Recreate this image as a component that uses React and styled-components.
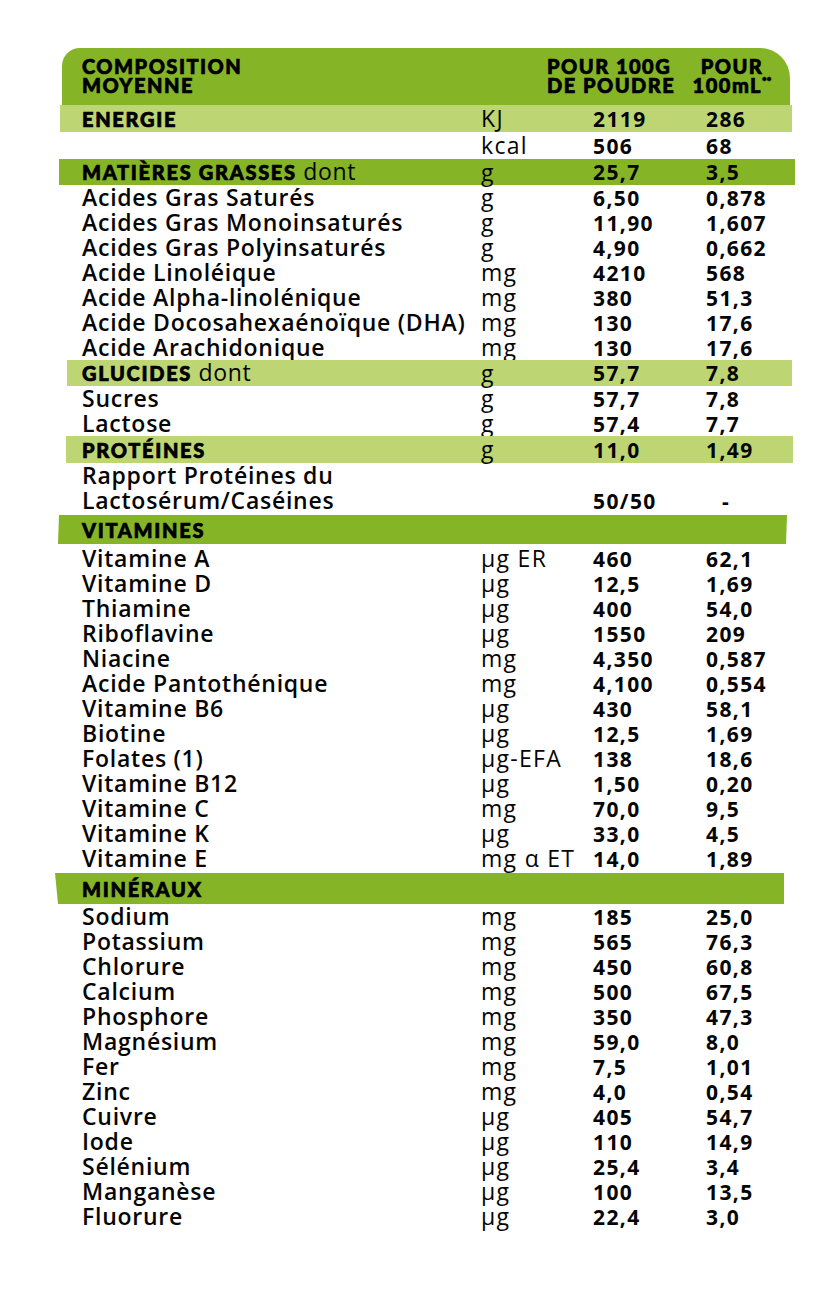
import React from 'react';
import styled, { createGlobalStyle } from 'styled-components';

const GlobalStyle = createGlobalStyle`
  html, body {
    margin: 0;
    padding: 0;
    background: #ffffff;
  }
  body {
    font-family: "Open Sans", "Liberation Sans", sans-serif;
    color: #050505;
  }
`;

const DARK = '#85b527';
const LIGHT = '#bdd572';

const Page = styled.div`
  width: 840px;
  height: 1291px;
  padding-top: 48px;
  box-sizing: border-box;
  display: flex;
  flex-direction: column;
`;

const Header = styled.div`
  margin-left: 62px;
  width: 728px;
  height: 57px;
  box-sizing: border-box;
  background: ${DARK};
  border-radius: 18px 30px 0 0;
  display: grid;
  grid-template-columns: 465px 141px 88px;
  padding: 9px 0 0 20px;
`;

const HeadText = styled.div`
  font-family: "Lato", "Roboto", sans-serif;
  font-weight: 900;
  font-size: 20px;
  line-height: 19px;
  letter-spacing: 1.5px;
  -webkit-text-stroke: 0.7px #000;
  color: #000;
  text-transform: uppercase;
  text-align: ${(p) => p.$align || 'left'};
  white-space: nowrap;

  sup {
    font-size: 11px;
    vertical-align: 7px;
    line-height: 0;
    letter-spacing: 0;
  }
`;

const Row = styled.div`
  margin-left: ${(p) => p.$l}px;
  width: ${(p) => p.$r - p.$l}px;
  height: ${(p) => p.$h}px;
  margin-top: ${(p) => p.$mt || 0}px;
  padding-left: ${(p) => 82 - p.$l}px;
  box-sizing: border-box;
  background: ${(p) => (p.$bg === 'dark' ? DARK : p.$bg === 'light' ? LIGHT : 'transparent')};
  clip-path: ${(p) => p.$clip || 'none'};
  display: grid;
  grid-template-columns: 399px 112px 113px 1fr;
  align-items: center;
`;

const Label = styled.div`
  font-size: 23px;
  font-weight: 600;
  line-height: 23px;
  white-space: nowrap;
  letter-spacing: 0.75px;
`;

const Title = styled.span`
  font-family: "Lato", "Roboto", sans-serif;
  font-weight: 900;
  font-size: 20px;
  letter-spacing: 1.7px;
  -webkit-text-stroke: 0.7px #000;
  color: #000;
  text-transform: uppercase;
`;

const Suffix = styled.span`
  font-weight: 500;
  letter-spacing: 0.6px;
`;

const Unit = styled.div`
  font-size: 23px;
  font-weight: 500;
  line-height: 23px;
  white-space: nowrap;
  letter-spacing: 1.3px;
`;

const Value = styled.div`
  font-size: 21px;
  font-weight: 700;
  line-height: 22px;
  white-space: nowrap;
  letter-spacing: 1.4px;
  padding-left: ${(p) => (p.$dash ? '16px' : '0')};
`;

const rows = [
  { bg: 'light', l: 60, r: 792, h: 27, title: 'Energie', unit: 'KJ', v1: '2119', v2: '286' },
  { l: 60, r: 792, h: 27, unit: 'kcal', v1: '506', v2: '68' },
  { bg: 'dark', l: 59, r: 795, h: 26, title: 'Matières grasses', suffix: ' dont', unit: 'g', v1: '25,7', v2: '3,5' },
  { label: 'Acides Gras Saturés', unit: 'g', v1: '6,50', v2: '0,878' },
  { label: 'Acides Gras Monoinsaturés', unit: 'g', v1: '11,90', v2: '1,607' },
  { label: 'Acides Gras Polyinsaturés', unit: 'g', v1: '4,90', v2: '0,662' },
  { label: 'Acide Linoléique', unit: 'mg', v1: '4210', v2: '568' },
  { label: 'Acide Alpha-linolénique', unit: 'mg', v1: '380', v2: '51,3' },
  { label: 'Acide Docosahexaénoïque (DHA)', unit: 'mg', v1: '130', v2: '17,6' },
  { label: 'Acide Arachidonique', unit: 'mg', v1: '130', v2: '17,6' },
  { bg: 'light', l: 67, r: 792, h: 26, title: 'Glucides', suffix: ' dont', unit: 'g', v1: '57,7', v2: '7,8' },
  { label: 'Sucres', unit: 'g', v1: '57,7', v2: '7,8' },
  { label: 'Lactose', unit: 'g', v1: '57,4', v2: '7,7' },
  { bg: 'light', l: 66, r: 793, h: 27, title: 'Protéines', unit: 'g', v1: '11,0', v2: '1,49' },
  { label: 'Rapport Protéines du' },
  { label: 'Lactosérum/Caséines', v1: '50/50', v2: '-', dash: true },
  { bg: 'dark', l: 58, r: 787, h: 29, mt: 2, title: 'Vitamines', clip: 'polygon(1px 0, 100% 0, calc(100% - 1px) 100%, 0 100%)' },
  { label: 'Vitamine A', unit: 'µg ER', v1: '460', v2: '62,1', mt: 2 },
  { label: 'Vitamine D', unit: 'µg', v1: '12,5', v2: '1,69' },
  { label: 'Thiamine', unit: 'µg', v1: '400', v2: '54,0' },
  { label: 'Riboflavine', unit: 'µg', v1: '1550', v2: '209' },
  { label: 'Niacine', unit: 'mg', v1: '4,350', v2: '0,587' },
  { label: 'Acide Pantothénique', unit: 'mg', v1: '4,100', v2: '0,554' },
  { label: 'Vitamine B6', unit: 'µg', v1: '430', v2: '58,1' },
  { label: 'Biotine', unit: 'µg', v1: '12,5', v2: '1,69' },
  { label: 'Folates (1)', unit: 'µg-EFA', v1: '138', v2: '18,6' },
  { label: 'Vitamine B12', unit: 'µg', v1: '1,50', v2: '0,20' },
  { label: 'Vitamine C', unit: 'mg', v1: '70,0', v2: '9,5' },
  { label: 'Vitamine K', unit: 'µg', v1: '33,0', v2: '4,5' },
  { label: 'Vitamine E', unit: 'mg α ET', v1: '14,0', v2: '1,89' },
  { bg: 'dark', l: 55, r: 784, h: 31, mt: 2, title: 'Minéraux', clip: 'polygon(0 0, 100% 0, 100% 100%, 3px 100%)' },
  { label: 'Sodium', unit: 'mg', v1: '185', v2: '25,0' },
  { label: 'Potassium', unit: 'mg', v1: '565', v2: '76,3' },
  { label: 'Chlorure', unit: 'mg', v1: '450', v2: '60,8' },
  { label: 'Calcium', unit: 'mg', v1: '500', v2: '67,5' },
  { label: 'Phosphore', unit: 'mg', v1: '350', v2: '47,3' },
  { label: 'Magnésium', unit: 'mg', v1: '59,0', v2: '8,0' },
  { label: 'Fer', unit: 'mg', v1: '7,5', v2: '1,01' },
  { label: 'Zinc', unit: 'mg', v1: '4,0', v2: '0,54' },
  { label: 'Cuivre', unit: 'µg', v1: '405', v2: '54,7' },
  { label: 'Iode', unit: 'µg', v1: '110', v2: '14,9' },
  { label: 'Sélénium', unit: 'µg', v1: '25,4', v2: '3,4' },
  { label: 'Manganèse', unit: 'µg', v1: '100', v2: '13,5' },
  { label: 'Fluorure', unit: 'µg', v1: '22,4', v2: '3,0' },
];

const App = () => {
  return (
    <>
      <GlobalStyle />
      <Page>
        <Header>
          <HeadText>
            Composition
            <br />
            Moyenne
          </HeadText>
          <HeadText>
            Pour 100g
            <br />
            de poudre
          </HeadText>
          <HeadText $align="center">
            Pour
            <br />
            <span style={{ textTransform: 'none' }}>100mL</span>
            <sup>**</sup>
          </HeadText>
        </Header>
        {rows.map((r, i) => (
          <Row
            key={i}
            $bg={r.bg}
            $l={r.l || 60}
            $r={r.r || 792}
            $h={r.h || 25}
            $mt={r.mt}
            $clip={r.clip}
          >
            <Label>
              {r.title ? <Title>{r.title}</Title> : r.label}
              {r.suffix && <Suffix>{r.suffix}</Suffix>}
            </Label>
            <Unit>{r.unit}</Unit>
            <Value>{r.v1}</Value>
            <Value $dash={r.dash}>{r.v2}</Value>
          </Row>
        ))}
      </Page>
    </>
  );
};

export default App;
